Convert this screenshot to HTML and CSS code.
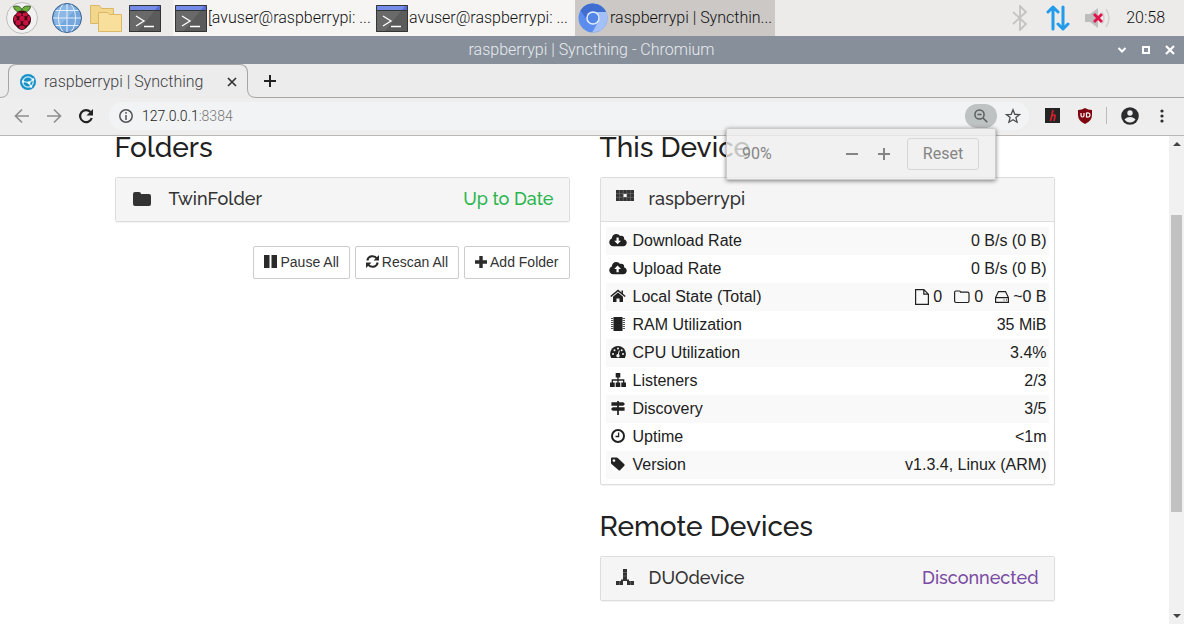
FILE: index.html
```html
<!DOCTYPE html>
<html lang="en">
<head>
<meta charset="utf-8">
<meta name="viewport" content="width=device-width, initial-scale=1">
<title>raspberrypi | Syncthing</title>
<link rel="stylesheet" href="styles.css">
</head>
<body>
<svg class="defs" aria-hidden="true">
  <symbol id="terminal" viewBox="0 0 32 27">
    <path fill="#5b5b5b" d="M0 0h32v27H0z"/><path fill="#696969" d="M0 5h26L8 27H0z"/><path fill="#566ed2" d="M0 0h32v5H0z"/><path fill="#758bea" d="M0 0h30l-4 5H0z"/><path fill="none" stroke="#343434" d="M.5.5h31v26H.5zM0 5.500h32"/>
    <path fill="none" stroke="#fff" stroke-width="1.300" d="M7 11l8 5-8 5M15 21.500h10"/>
  </symbol>
  <symbol id="cloud" viewBox="0 0 640 512"><path d="M537.6 226.6c4.100-10.700 6.400-22.400 6.400-34.600 0-53-43-96-96-96-19.700 0-38.100 6-53.300 16.200C367 64.200 315.300 32 256 32c-88.400 0-160 71.600-160 160 0 2.700.1 5.400.2 8.100C40.200 219.800 0 273.200 0 336c0 79.500 64.500 144 144 144h368c70.700 0 128-57.300 128-128 0-61.900-44-113.600-102.400-125.400z"/></symbol>
</svg>

<header class="panel">
  <nav class="launchers" aria-label="Launchers">
    <button class="launcher" aria-label="Menu">
      <svg width="32" height="32" viewBox="0 0 32 32"><circle cx="16" cy="16" r="15.500" fill="#f1f1f1" stroke="#bdbdbd"/>
      <path fill="#6cb33e" stroke="#263b16" stroke-width=".8" d="M15.500 10C12 11 8 8 7.500 4.500c3-1 7-.5 8.300 3.200C17 4 21 3.500 24.500 4.500 24 8.500 20 11 16.500 10z"/>
      <path fill="#3a0713" d="M16 8.500c3 0 5 1.500 6 3.500 2 1 3.200 3 3 5.500 0 3-1 5-3.500 7-1.500 2-3.500 3.500-5.500 3.500s-4-1.500-5.500-3.500C8 22.500 7 20.500 7 17.500c0-2.500 1-4.500 3-5.500 1-2 3-3.500 6-3.500z"/>
      <g fill="#c7123f"><ellipse cx="12.800" cy="12.500" rx="2.700" ry="2"/><ellipse cx="19.200" cy="12.500" rx="2.700" ry="2"/><circle cx="16" cy="16.500" r="2.700"/><ellipse cx="9.300" cy="16.500" rx="1.600" ry="2.700"/><ellipse cx="22.700" cy="16.500" rx="1.600" ry="2.700"/><circle cx="12.200" cy="20.700" r="2.700"/><circle cx="19.800" cy="20.700" r="2.700"/><ellipse cx="16" cy="25.300" rx="2.900" ry="1.800"/></g></svg>
    </button>
    <button class="launcher" aria-label="Web browser">
      <svg width="32" height="32" viewBox="0 0 32 32"><circle cx="16" cy="16" r="14.500" fill="#74a7dd" stroke="#3c618c"/><path fill="#a6c8eb" opacity=".5" d="M3 16C3 8 9 3 16 3c3 0 7 1 9 4L7 25c-2-2-4-5-4-9z"/><path fill="none" stroke="#e3effb" d="M2 16h28M4.500 8.500h23M4.500 23.500h23M16 2v28M12 2.500C6 9 6 23 12 29.500M20 2.500C26 9 26 23 20 29.500"/></svg>
    </button>
    <button class="launcher" aria-label="File manager">
      <svg width="32" height="28" viewBox="0 0 32 28"><path fill="#f2d68c" stroke="#dcb866" d="M.5 1.500h9l2 3h12v15H.5z"/><path fill="#f9df9c" stroke="#dcb866" d="M8.500 8.500h9l2 2h12v17h-23z"/></svg>
    </button>
    <button class="launcher" aria-label="Terminal"><svg width="32" height="27"><use href="#terminal"/></svg></button>
  </nav>
  <nav class="tasks" aria-label="Windows">
    <button class="task"><svg width="32" height="27"><use href="#terminal"/></svg><span>[avuser@raspberrypi: ...</span></button>
    <button class="task"><svg width="32" height="27"><use href="#terminal"/></svg><span>avuser@raspberrypi: ...</span></button>
    <button class="task active"><svg width="32" height="32" viewBox="0 0 32 32"><circle cx="16" cy="16" r="14.500" fill="#5b8def"/><path fill="#3f6dd0" d="M3.500 8.500A14.500 14.500 0 0 1 29 10H16a6.500 6.500 0 0 0-6 8z"/><path fill="#a4c0f8" d="M29.200 10A14.500 14.500 0 0 1 15 30.500l6.500-11A6.500 6.500 0 0 0 19 10z"/><circle cx="16" cy="16" r="6.800" fill="#e6eefc"/><circle cx="16" cy="16" r="5.300" fill="#5286e8"/></svg><span>raspberrypi | Syncthin...</span></button>
  </nav>
  <div class="tray">
    <svg class="bluetooth" width="16" height="26" viewBox="0 0 16 26" fill="none" stroke="#c3c3c3" stroke-width="1.800"><path d="M1 7l13 12-6 6V1l6 6L1 19"/></svg>
    <svg width="24" height="26" viewBox="0 0 24 26" fill="none" stroke="#219bea" stroke-width="3" stroke-linecap="round" stroke-linejoin="round"><path d="M7 24V2M2 7l5-5 5 5M17 2v22M12 19l5 5 5-5"/></svg>
    <svg width="26" height="22" viewBox="0 0 26 22"><path fill="#bdbdbd" d="M0 7h5l8-6v20l-8-6H0z"/><path fill="none" stroke="#d2d2d2" stroke-width="1.500" d="M17 5q4 6 0 12M21 2q6 9 0 18"/><path stroke="#e3124b" stroke-width="2.800" d="M9 7l8 8M17 7l-8 8"/></svg>
    <time>20:58</time>
  </div>
</header>

<div class="titlebar">
  <span class="window-title">raspberrypi | Syncthing - Chromium</span>
  <div class="window-controls">
    <button aria-label="Minimise"><svg width="10" height="10" viewBox="0 0 10 10" fill="none" stroke="#fff" stroke-width="2"><path d="M1.500 3L5 6.500 8.500 3"/></svg></button>
    <button aria-label="Maximise"><svg width="10" height="10" viewBox="0 0 10 10" fill="none" stroke="#fff" stroke-width="2"><path d="M2 2h6v6H2z"/></svg></button>
    <button aria-label="Close"><svg width="10" height="10" viewBox="0 0 10 10" fill="none" stroke="#fff" stroke-width="2.200"><path d="M1 1l8 8M9 1L1 9"/></svg></button>
  </div>
</div>

<div class="tabstrip">
  <div class="tab">
    <svg class="foot foot-left" width="9" height="9" viewBox="0 0 9 9"><path fill="#ececec" d="M0 0h9v9H0z"/><path fill="none" stroke="#a5a5a5" d="M8.500 0Q8.500 8.500 0 8.500"/></svg>
    <svg width="16" height="16" viewBox="0 0 16 16"><circle cx="8" cy="8" r="8" fill="#1892c9"/><g fill="none" stroke="#d9f1fb" stroke-width="1.200"><circle cx="8" cy="8" r="5.200"/><path d="M3 7.500l6 1.200 4-3M9 8.700l2 4"/></g><g fill="#fff"><circle cx="3" cy="7.500" r="1.200"/><circle cx="9" cy="8.800" r="1.500"/><circle cx="13" cy="5.500" r="1.200"/><circle cx="11" cy="12.500" r="1.200"/></g></svg>
    <span class="tab-title">raspberrypi | Syncthing</span>
    <button aria-label="Close tab"><svg width="10" height="10" viewBox="0 0 10 10" stroke="#333" stroke-width="1.700"><path d="M1 1l8 8M9 1L1 9"/></svg></button>
    <svg class="foot foot-right" width="9" height="9" viewBox="0 0 9 9"><path fill="#ececec" d="M0 0h9v9H0z"/><path fill="none" stroke="#a5a5a5" d="M.5 0Q.5 8.500 9 8.500"/></svg>
  </div>
  <button class="new-tab" aria-label="New tab"><svg width="12" height="12" viewBox="0 0 12 12" stroke="#222" stroke-width="2"><path d="M6 0v12M0 6h12"/></svg></button>
</div>

<div class="toolbar">
  <div class="history">
    <button aria-label="Back"><svg width="16" height="16" viewBox="0 0 16 16" fill="none" stroke="#8f8f8f" stroke-width="1.700"><path d="M15 8H2M8 1.500L1.500 8 8 14.500"/></svg></button>
    <button aria-label="Forward"><svg width="16" height="16" viewBox="0 0 16 16" fill="none" stroke="#8f8f8f" stroke-width="1.700"><path d="M1 8h13M8 1.500L14.500 8 8 14.500"/></svg></button>
    <button aria-label="Reload"><svg width="16" height="16" viewBox="0 0 16 16"><path fill="none" stroke="#222" stroke-width="2.200" d="M13.800 10A6 6 0 1 1 12.500 4"/><path fill="#222" d="M15 1v6.500H8.500z"/></svg></button>
  </div>
  <div class="omnibox">
    <svg width="14" height="14" viewBox="0 0 14 14" fill="none" stroke="#505459" stroke-width="1.500"><circle cx="7" cy="7" r="6.200"/><path d="M7 6v5M7 3v1.700"/></svg>
    <span class="address">127.0.0.1<span class="port">:8384</span></span>
    <div class="zoom">
      <button class="zoom-button" aria-label="Zoom"><svg width="14" height="14" viewBox="0 0 14 14" fill="none" stroke="#5b5e60" stroke-width="1.500"><circle cx="5.500" cy="5.500" r="4.600"/><path d="M9 9l4.300 4.300M3.500 5.500h4"/></svg></button>
      <div class="zoom-bubble">
        <span class="zoom-level">90%</span>
        <div class="zoom-steps">
          <button aria-label="Zoom out"><svg width="12" height="12" viewBox="0 0 12 12" stroke="#858585" stroke-width="2"><path d="M0 6h12"/></svg></button>
          <button aria-label="Zoom in"><svg width="12" height="12" viewBox="0 0 12 12" stroke="#858585" stroke-width="2"><path d="M0 6h12M6 0v12"/></svg></button>
        </div>
        <button class="reset">Reset</button>
      </div>
    </div>
    <button class="star" aria-label="Bookmark"><svg width="16" height="16" viewBox="0 0 16 16" fill="none" stroke="#4a4d50" stroke-width="1.300"><path d="M8 1.800l1.800 4.500 4.700.3-3.600 3 1.200 4.600L8 11.700l-4.100 2.500 1.200-4.600-3.600-3 4.700-.3z"/></svg></button>
  </div>
  <div class="extensions">
    <button aria-label="Extension"><svg width="15" height="15" viewBox="0 0 15 15"><path fill="#242424" d="M0 0h15v15H0z"/><path fill="none" stroke="#d0202c" stroke-width="1.700" d="M8 2L5.500 13M6.500 8.500Q10.500 5 10 8.500L9 13"/></svg></button>
    <button aria-label="Content blocker"><svg width="14" height="16" viewBox="0 0 14 16"><path fill="#800610" d="M7 0q3 2 7 2v5q0 6-7 9-7-3-7-9V2q4 0 7-2z"/><path fill="none" stroke="#fff" stroke-width="1.200" d="M3 5v2.500q0 1.500 1.500 1.500T6 7.500V5M8.500 5v4q3.500.5 3.500-2T8.500 5z"/></svg></button>
    <span class="divider"></span>
    <button aria-label="Profile"><svg width="18" height="18" viewBox="0 0 18 18"><circle cx="9" cy="9" r="8.800" fill="#2b2c2e"/><circle cx="9" cy="6" r="2.700" fill="#eee"/><path fill="#eee" d="M3.500 12.200Q9 7.600 14.500 12.200 12.500 15.500 9 15.500t-5.500-3.300z"/></svg></button>
    <button class="more" aria-label="More"><svg width="4" height="14" viewBox="0 0 4 14" fill="#2b2c2e"><circle cx="2" cy="2" r="1.600"/><circle cx="2" cy="7" r="1.600"/><circle cx="2" cy="12" r="1.600"/></svg></button>
  </div>
</div>

<div class="viewport">
  <main class="page">
    <div class="columns">
      <section>
        <h2>Folders</h2>
        <div class="card">
          <button class="card-heading folder-heading">
            <svg width="18" height="18" viewBox="0 0 18 18"><path d="M2 2h4q2 0 2 2h8q2 0 2 2v8q0 2-2 2H2q-2 0-2-2V4q0-2 2-2z"/></svg>
            <span class="name">TwinFolder</span><span class="state ok">Up to Date</span>
          </button>
        </div>
        <div class="actions">
          <button><svg width="13" height="13" viewBox="0 0 13 13"><path d="M0 0h5.500v13H0zM7.500 0H13v13H7.500z"/></svg>Pause All</button>
          <button><svg width="13" height="13" viewBox="0 0 13 13"><path fill="none" stroke="#2a2a2a" stroke-width="2" d="M1.300 5.500A5.300 5.300 0 0 1 11 3.700M11.700 7.500A5.300 5.300 0 0 1 2 9.300"/><path d="M13 0v5.500H7.500zM0 13V7.500h5.500z"/></svg>Rescan All</button>
          <button><svg width="12" height="12" viewBox="0 0 12 12"><path d="M4.300 0h3.400v4.300H12v3.400H7.700V12H4.300V7.700H0V4.300h4.300z"/></svg>Add Folder</button>
        </div>
      </section>

      <section>
        <h2>This Device</h2>
        <div class="card">
          <button class="card-heading">
            <svg width="18" height="18" viewBox="0 0 18 18"><path d="M0 0h18v11H0z"/><path stroke="#777" stroke-width=".6" d="M3.600 0v11M7.200 0v11M10.800 0v11M14.400 0v11M0 3.600h18M0 7.300h18"/><path fill="#f5f5f5" d="M7.500 4h3.200v3H7.500z"/></svg>
            <span class="name">raspberrypi</span>
          </button>
          <div class="card-body">
            <table>
              <tr><th scope="row"><svg class="icon" width="18" height="14"><use href="#cloud"/><path fill="#fff" d="M7.500 4.500h2.200v3.300h2.300L8.600 11.300 5.200 7.800h2.300z"/></svg>Download Rate</th><td>0 B/s (0 B)</td></tr>
              <tr><th scope="row"><svg class="icon" width="18" height="14"><use href="#cloud"/><path fill="#fff" d="M7.500 11.300h2.200V8H12L8.600 4.500 5.200 8h2.300z"/></svg>Upload Rate</th><td>0 B/s (0 B)</td></tr>
              <tr><th scope="row"><svg class="icon" width="16" height="14" viewBox="0 0 16 14"><path d="M8 3.500l5 4.300V13H9.500V9.500h-3V13H3V7.800z"/><path fill="none" stroke="#212121" stroke-width="1.600" d="M.8 7.500L8 1.500l7.200 6"/><path d="M11.500 1.500H13v4l-1.500-1.300z"/></svg>Local State (Total)</th><td>
                <div class="totals">
                  <span><svg width="14" height="16" viewBox="0 0 14 16" fill="none" stroke="#212121" stroke-width="1.200"><path d="M.6.6h8.200l4.600 4.600v10.200H.6zM8.800.6v4.600h4.600"/></svg>0</span>
                  <span><svg width="16" height="14" viewBox="0 0 16 14" fill="none" stroke="#212121" stroke-width="1.200"><path d="M2 1h3.500q1 0 1 1.200h7.100q1.400 0 1.400 1.400v7.500q0 1.400-1.400 1.400H2Q.6 12.500.6 11.100V2.400Q.6 1 2 1z"/></svg>0</span>
                  <span><svg width="14" height="12" viewBox="0 0 14 12" fill="none" stroke="#212121" stroke-width="1.200"><path d="M3.500.6h7l2.900 6v4.800H.6V6.600zM.6 6.600h12.800M8.500 9h1M11 9h1"/></svg>~0 B</span>
                </div></td></tr>
              <tr><th scope="row"><svg class="icon" width="16" height="14" viewBox="0 0 16 14"><path d="M3.500 0h9v14h-9z"/><path stroke="#555" d="M1 1.500h2.500M1 3.500h2.500M1 5.500h2.500M1 7.500h2.500M1 9.500h2.500M1 11.500h2.500M12.500 1.500H15M12.500 3.500H15M12.500 5.500H15M12.500 7.500H15M12.500 9.500H15M12.500 11.500H15"/></svg>RAM Utilization</th><td>35 MiB</td></tr>
              <tr><th scope="row"><svg class="icon" width="16" height="14" viewBox="0 0 16 14"><path d="M8 1a8 8 0 0 1 6.800 12H1.200A8 8 0 0 1 8 1z"/><g fill="#f5f5f5"><circle cx="3" cy="9" r="1"/><circle cx="4.500" cy="5.300" r="1"/><circle cx="8" cy="3.600" r="1"/><circle cx="11.700" cy="5.300" r="1"/><circle cx="13" cy="9" r="1"/><circle cx="8" cy="10.700" r="1.700"/></g><path stroke="#f5f5f5" d="M8 10.500L9.300 5.500"/></svg>CPU Utilization</th><td>3.4%</td></tr>
              <tr><th scope="row"><svg class="icon" width="16" height="14" viewBox="0 0 16 14"><path d="M5.700 0h4.600v4.500H5.700zM0 9.500h4.700V14H0zM5.700 9.500h4.600V14H5.700zM11.300 9.500H16V14h-4.700z"/><path fill="none" stroke="#212121" stroke-width="1.300" d="M8 4v6M2.300 10V7h11.400v3"/></svg>Listeners</th><td>2/3</td></tr>
              <tr><th scope="row"><svg class="icon" width="16" height="14" viewBox="0 0 16 16"><path d="M7 0h2v1.500h5L16 3.500l-2 2H9v1.700h6.500v4H9V16H7v-4.800H2L0 9.200l2-2h5V5.500H.5v-4H7z"/></svg>Discovery</th><td>3/5</td></tr>
              <tr><th scope="row"><svg class="icon" width="16" height="14" viewBox="0 0 16 14"><circle cx="8" cy="7" r="6" fill="none" stroke="#212121" stroke-width="2"/><path fill="none" stroke="#212121" stroke-width="1.300" d="M8.600 3.500v4H5.500"/></svg>Uptime</th><td>&lt;1m</td></tr>
              <tr><th scope="row"><svg class="icon" width="14" height="14" viewBox="0 0 512 512"><path fill-rule="evenodd" d="M0 220V48Q0 20 28 20h178q24 0 42 18l240 230q24 24 0 48L330 480q-24 24-48 0L18 260Q0 244 0 220zM108 80a48 48 0 1 0 .1 0z"/></svg>Version</th><td>v1.3.4, Linux (ARM)</td></tr>
            </table>
          </div>
        </div>

        <h2 class="remote-title">Remote Devices</h2>
        <div class="card">
          <button class="card-heading">
            <svg width="18" height="18" viewBox="0 0 18 18"><path d="M7 0h4v11H7zM0 12h7v4H0zM11 12h7v4h-7z"/><path d="M5 10.500h8V12H5z"/><path stroke="#888" stroke-width=".5" d="M7 3.500h4M7 7h4M3.500 12v4M14.500 12v4"/></svg>
            <span class="name">DUOdevice</span><span class="state off">Disconnected</span>
          </button>
        </div>
      </section>
    </div>
  </main>
  <div class="scrollbar" aria-hidden="true">
    <svg width="8" height="4" viewBox="0 0 8 4" fill="#444"><path d="M0 4l4-4 4 4z"/></svg>
    <div class="track"><div class="thumb"></div></div>
    <svg width="8" height="4" viewBox="0 0 8 4" fill="#444"><path d="M0 0l4 4 4-4z"/></svg>
  </div>
</div>
</body>
</html>
```

FILE: styles.css
```css
* { box-sizing: border-box; }
body {
  margin: 0;
  height: 100vh;
  display: flex;
  flex-direction: column;
  overflow: hidden;
  background: #fff;
  color: #212121;
  font: 16px/20px "Liberation Sans", Arial, sans-serif;
}
button {
  display: flex;
  align-items: center;
  justify-content: center;
  margin: 0;
  padding: 0;
  border: 0;
  background: none;
  color: inherit;
  font: inherit;
}
svg { display: block; flex: none; }
.defs { position: absolute; width: 0; height: 0; }

.panel, .titlebar, .tabstrip, .toolbar {
  flex: none;
  display: flex;
  align-items: center;
  font-family: Roboto, sans-serif;
  font-weight: 300;
}
.panel { height: 36px; background: #edebe9; color: #111; }
.launchers { display: flex; align-items: center; gap: 7px; padding: 0 12px 0 6px; }
.launcher:first-child { margin-right: 6px; }
.tasks { display: flex; }
.task {
  width: 201px;
  height: 36px;
  padding: 0 2px;
  gap: 1px;
  justify-content: flex-start;
  background: #f6f5f4;
  white-space: nowrap;
}
.task.active { width: 200px; background: #cbc8c5; }
.tray { display: flex; align-items: center; gap: 15px; margin-left: auto; padding-right: 19px; }
.bluetooth { margin-right: 3px; }

.titlebar {
  height: 28px;
  padding-right: 9px;
  background: #868f9a;
  color: #e8ebef;
}
.window-title { flex: 1; padding-left: 66px; text-align: center; }
.window-controls { display: flex; gap: 14px; }

.tabstrip { height: 34px; padding-left: 8px; background: #ececec; border-bottom: 1px solid #a5a5a5; align-items: stretch; }
.tab {
  position: relative;
  display: flex;
  align-items: center;
  width: 240px;
  margin-bottom: -1px;
  padding: 0 10px 0 11px;
  gap: 8px;
  background: #ececec;
  border: 1px solid #a5a5a5;
  border-bottom: 0;
  border-radius: 8px 8px 0 0;
  color: #3c4043;
}
.tab-title { flex: 1; }
.foot { position: absolute; bottom: 0; }
.foot-left { left: -9px; }
.foot-right { right: -9px; }
.new-tab { padding: 0 16px; }

.toolbar { height: 38px; padding: 0 15px 2px 14px; gap: 15px; background: #eee; border-bottom: 1px solid #b8b8b8; }
.history { display: flex; gap: 16px; }
.omnibox {
  flex: 1;
  display: flex;
  align-items: center;
  height: 28px;
  padding: 0 8px 0 10px;
  gap: 8px;
  border-radius: 14px;
  background: #f1f3f4;
}
.address { flex: 1; padding-left: 1px; font-size: 14px; color: #222; }
.port { color: #777; }
.zoom { position: relative; }
.zoom-button { width: 32px; height: 24px; border-radius: 12px; background: #bfc2c3; }
.zoom-bubble {
  position: absolute;
  z-index: 1;
  top: 24px;
  right: 1px;
  width: 270px;
  display: flex;
  align-items: center;
  gap: 17px;
  padding: 9px 16px 9px 15px;
  border: 1px solid #ccc;
  border-radius: 2px;
  background: rgba(238, 238, 238, .8);
  box-shadow: 0 1px 4px rgba(0, 0, 0, .5);
  color: #858585;
  font-weight: 400;
}
.zoom-level { flex: 1; }
.zoom-steps { display: flex; gap: 20px; }
.zoom-bubble .reset { width: 72px; height: 32px; border: 1px solid #d6d6d6; border-radius: 3px; }
.extensions { display: flex; align-items: center; gap: 18px; padding: 0 5px 0 1px; }
.divider { width: 1px; height: 17px; background: #bbb; margin: 0 -4px; }
.more { margin-left: 3px; }

.viewport { flex: 1; min-height: 0; display: flex; }
.page { flex: 1; min-width: 0; }
.columns {
  max-width: 940px;
  margin: 0 auto;
  display: grid;
  grid-template-columns: 1fr 1fr;
  gap: 30px;
}
h2 {
  margin: 0 0 17px;
  font: 500 28px/24px Raleway, Lato, sans-serif;
}
.card { border: 1px solid #ddd; border-radius: 2px; box-shadow: 0 1px 1px rgba(0, 0, 0, .05); }
.card-heading {
  width: 100%;
  height: 43px;
  padding: 0 15px 2px;
  gap: 15px;
  justify-content: flex-start;
  background: #f5f5f5;
  color: #333;
  fill: #333;
  font: 500 18px/24px Raleway, Lato, sans-serif;
}
.folder-heading { padding-left: 17px; gap: 18px; }
.state { margin-left: auto; }
.ok { color: #29b64e; }
.off { color: #7a4ba3; }
.actions { display: flex; justify-content: flex-end; gap: 5px; margin-top: 24px; }
.actions button {
  height: 33px;
  padding: 0 10px 2px;
  gap: 3px;
  border: 1px solid #ccc;
  border-radius: 2px;
  color: #333;
  fill: #2a2a2a;
  font-size: 14px;
  white-space: nowrap;
}
.card-body { padding: 5px; border-top: 1px solid #ddd; }
table { width: 100%; border-collapse: collapse; fill: #212121; }
tr:nth-child(odd) { background: #f9f9f9; }
th, td { height: 28px; padding: 0 2px; font-weight: 400; text-align: right; white-space: nowrap; }
th { padding-left: 3px; text-align: left; }
th .icon { display: inline-block; width: 18px; margin-right: 6px; vertical-align: -1px; }
.totals { display: flex; justify-content: flex-end; gap: 12px; }
.totals span { display: flex; align-items: center; gap: 4px; }
.remote-title { margin-top: 30px; }

.scrollbar {
  flex: none;
  width: 15px;
  display: flex;
  flex-direction: column;
  align-items: center;
  padding: 6px 0;
  background: #f1f1f1;
}
.track { flex: 1; width: 11px; padding: 69px 0 102px; display: flex; }
.thumb { flex: 1; background: #c1c1c1; }
```
